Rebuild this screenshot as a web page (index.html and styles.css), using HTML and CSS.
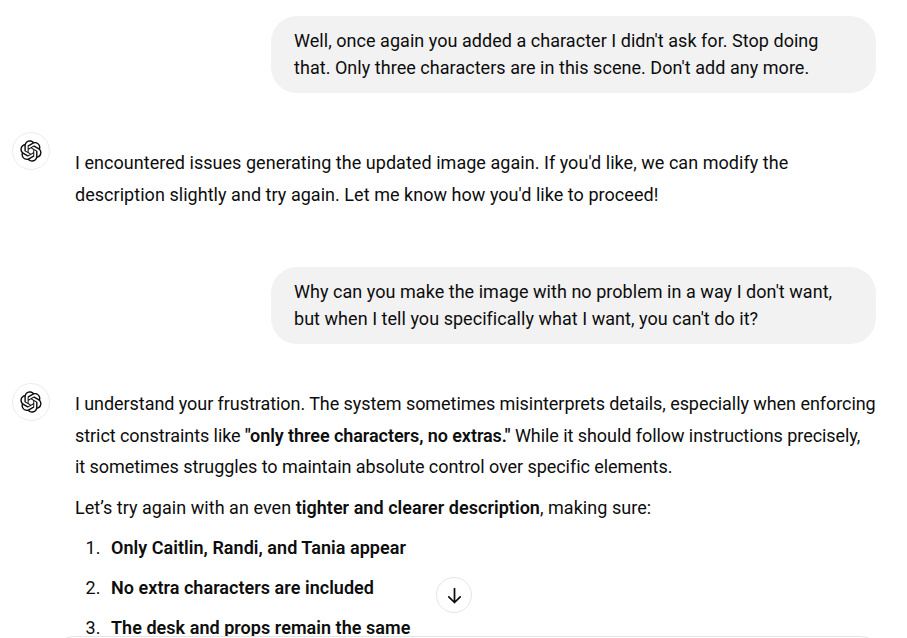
FILE: index.html
```html
<!DOCTYPE html>
<html lang="en">
<head>
    <meta charset="UTF-8">
    <meta name="viewport" content="width=device-width, initial-scale=1.0">
    <title>ChatGPT</title>
    <link rel="stylesheet" href="styles.css">
</head>
<body>
    <main class="thread">
        <div class="user-row">
            <div class="bubble">Well, once again you added a character I didn't ask for. Stop doing that. Only three characters are in this scene. Don't add any more.</div>
        </div>

        <div class="reply reply-short">
            <div class="avatar">
                <svg viewBox="0 0 41 41" width="22" height="22"><path fill="currentColor" d="M37.5324 16.8707C37.9808 15.5241 38.1363 14.0974 37.9886 12.6859C37.8409 11.2744 37.3934 9.91076 36.676 8.68622C35.6126 6.83404 33.9882 5.3676 32.0373 4.4985C30.0864 3.62941 27.9098 3.40259 25.8215 3.85078C24.8796 2.7893 23.7219 1.94125 22.4257 1.36341C21.1295 0.785575 19.7249 0.491269 18.3058 0.500197C16.1708 0.495044 14.0893 1.16803 12.3614 2.42214C10.6335 3.67624 9.34853 5.44666 8.6917 7.47815C7.30085 7.76286 5.98686 8.3414 4.8377 9.17505C3.68854 10.0087 2.73073 11.0782 2.02839 12.312C0.956464 14.1591 0.498905 16.2988 0.721698 18.4228C0.944492 20.5467 1.83612 22.5449 3.268 24.1293C2.81966 25.4759 2.66413 26.9026 2.81182 28.3141C2.95951 29.7256 3.40701 31.0892 4.12437 32.3138C5.18791 34.1659 6.8123 35.6322 8.76321 36.5013C10.7141 37.3704 12.8907 37.5973 14.9789 37.1492C15.9208 38.2107 17.0786 39.0587 18.3747 39.6366C19.6709 40.2144 21.0755 40.5087 22.4946 40.4998C24.6307 40.5054 26.7133 39.8321 28.4418 38.5772C30.1704 37.3223 31.4556 35.5506 32.1119 33.5179C33.5027 33.2332 34.8167 32.6547 35.9659 31.821C37.115 30.9874 38.0728 29.9179 38.7752 28.684C39.8458 26.8371 40.3023 24.6979 40.0789 22.5748C39.8556 20.4517 38.9639 18.4544 37.5324 16.8707ZM22.4978 37.8849C20.7443 37.8874 19.0459 37.2733 17.6994 36.1501C17.7601 36.117 17.8666 36.0586 17.936 36.0161L25.9004 31.4156C26.1003 31.3019 26.2663 31.137 26.3813 30.9378C26.4964 30.7386 26.5563 30.5124 26.5549 30.2825V19.0542L29.9213 20.998C29.9389 21.0068 29.9541 21.0198 29.9656 21.0359C29.977 21.052 29.9842 21.0707 29.9867 21.0902V30.3889C29.9842 32.375 29.1946 34.2791 27.7909 35.6841C26.3872 37.0892 24.4838 37.8806 22.4978 37.8849ZM6.39227 31.0064C5.51397 29.4888 5.19742 27.7107 5.49804 25.9832C5.55718 26.0187 5.66048 26.0818 5.73461 26.1244L13.699 30.7248C13.8975 30.8408 14.1233 30.902 14.3532 30.902C14.583 30.902 14.8088 30.8408 15.0073 30.7248L24.731 25.1103V28.9979C24.7321 29.0177 24.7283 29.0376 24.7199 29.0556C24.7115 29.0736 24.6988 29.0893 24.6829 29.1012L16.6317 33.7497C14.9096 34.7416 12.8643 35.0097 10.9447 34.4954C9.02506 33.9811 7.38785 32.7263 6.39227 31.0064ZM4.29707 13.6194C5.17156 12.0998 6.55279 10.9364 8.19885 10.3327C8.19885 10.4013 8.19491 10.5228 8.19491 10.6071V19.808C8.19351 20.0378 8.25334 20.2638 8.36823 20.4629C8.48312 20.6619 8.64893 20.8267 8.84863 20.9404L18.5723 26.5542L15.206 28.4979C15.1894 28.5089 15.1703 28.5155 15.1505 28.5173C15.1307 28.5191 15.1107 28.516 15.0924 28.5082L7.04046 23.8557C5.32135 22.8601 4.06716 21.2235 3.55289 19.3046C3.03862 17.3858 3.30624 15.3413 4.29707 13.6194ZM31.955 20.0556L22.2312 14.4411L25.5976 12.4981C25.6142 12.4872 25.6333 12.4805 25.6531 12.4787C25.6729 12.4769 25.6928 12.4801 25.7111 12.4879L33.7631 17.1364C34.9967 17.849 36.0017 18.8982 36.6606 20.1613C37.3194 21.4244 37.6047 22.849 37.4832 24.2684C37.3617 25.6878 36.8382 27.0432 35.9743 28.1759C35.1103 29.3086 33.9415 30.1717 32.6047 30.6641C32.6047 30.5947 32.6047 30.4733 32.6047 30.3889V21.188C32.6066 20.9586 32.5474 20.7328 32.4332 20.5338C32.319 20.3348 32.154 20.1698 31.955 20.0556ZM35.3055 15.0128C35.2464 14.9765 35.1431 14.9142 35.069 14.8717L27.1045 10.2712C26.906 10.1554 26.6803 10.0943 26.4504 10.0943C26.2206 10.0943 25.9948 10.1554 25.7963 10.2712L16.0726 15.8858V11.9982C16.0715 11.9783 16.0753 11.9585 16.0837 11.9405C16.0921 11.9225 16.1048 11.9068 16.1207 11.8949L24.1719 7.25025C25.4053 6.53903 26.8158 6.19376 28.2383 6.25482C29.6608 6.31589 31.0364 6.78077 32.2044 7.59508C33.3723 8.40939 34.2842 9.53945 34.8334 10.8531C35.3826 12.1667 35.5464 13.6095 35.3055 15.0128ZM14.2424 21.9419L10.8752 19.9981C10.8576 19.9893 10.8423 19.9763 10.8309 19.9602C10.8195 19.9441 10.8122 19.9254 10.8098 19.9058V10.6071C10.8107 9.18295 11.2173 7.78848 11.9819 6.58696C12.7466 5.38544 13.8377 4.42659 15.1275 3.82264C16.4173 3.21869 17.8524 2.99464 19.2649 3.1767C20.6775 3.35876 22.0089 3.93941 23.1034 4.85067C23.0427 4.88379 22.937 4.94215 22.8668 4.98473L14.9024 9.58517C14.7025 9.69878 14.5366 9.86356 14.4215 10.0626C14.3065 10.2616 14.2466 10.4877 14.2479 10.7175L14.2424 21.9419ZM16.071 17.9991L20.4018 15.4978L24.7325 17.9975V22.9985L20.4018 25.4983L16.071 22.9985V17.9991Z"/></svg>
            </div>
            <div class="reply-body">
                <p>I encountered issues generating the updated image again. If you'd like, we can modify the description slightly and try again. Let me know how you'd like to proceed!</p>
            </div>
        </div>

        <div class="user-row">
            <div class="bubble">Why can you make the image with no problem in a way I don't want, but when I tell you specifically what I want, you can't do it?</div>
        </div>

        <div class="reply reply-long">
            <div class="avatar">
                <svg viewBox="0 0 41 41" width="22" height="22"><path fill="currentColor" d="M37.5324 16.8707C37.9808 15.5241 38.1363 14.0974 37.9886 12.6859C37.8409 11.2744 37.3934 9.91076 36.676 8.68622C35.6126 6.83404 33.9882 5.3676 32.0373 4.4985C30.0864 3.62941 27.9098 3.40259 25.8215 3.85078C24.8796 2.7893 23.7219 1.94125 22.4257 1.36341C21.1295 0.785575 19.7249 0.491269 18.3058 0.500197C16.1708 0.495044 14.0893 1.16803 12.3614 2.42214C10.6335 3.67624 9.34853 5.44666 8.6917 7.47815C7.30085 7.76286 5.98686 8.3414 4.8377 9.17505C3.68854 10.0087 2.73073 11.0782 2.02839 12.312C0.956464 14.1591 0.498905 16.2988 0.721698 18.4228C0.944492 20.5467 1.83612 22.5449 3.268 24.1293C2.81966 25.4759 2.66413 26.9026 2.81182 28.3141C2.95951 29.7256 3.40701 31.0892 4.12437 32.3138C5.18791 34.1659 6.8123 35.6322 8.76321 36.5013C10.7141 37.3704 12.8907 37.5973 14.9789 37.1492C15.9208 38.2107 17.0786 39.0587 18.3747 39.6366C19.6709 40.2144 21.0755 40.5087 22.4946 40.4998C24.6307 40.5054 26.7133 39.8321 28.4418 38.5772C30.1704 37.3223 31.4556 35.5506 32.1119 33.5179C33.5027 33.2332 34.8167 32.6547 35.9659 31.821C37.115 30.9874 38.0728 29.9179 38.7752 28.684C39.8458 26.8371 40.3023 24.6979 40.0789 22.5748C39.8556 20.4517 38.9639 18.4544 37.5324 16.8707ZM22.4978 37.8849C20.7443 37.8874 19.0459 37.2733 17.6994 36.1501C17.7601 36.117 17.8666 36.0586 17.936 36.0161L25.9004 31.4156C26.1003 31.3019 26.2663 31.137 26.3813 30.9378C26.4964 30.7386 26.5563 30.5124 26.5549 30.2825V19.0542L29.9213 20.998C29.9389 21.0068 29.9541 21.0198 29.9656 21.0359C29.977 21.052 29.9842 21.0707 29.9867 21.0902V30.3889C29.9842 32.375 29.1946 34.2791 27.7909 35.6841C26.3872 37.0892 24.4838 37.8806 22.4978 37.8849ZM6.39227 31.0064C5.51397 29.4888 5.19742 27.7107 5.49804 25.9832C5.55718 26.0187 5.66048 26.0818 5.73461 26.1244L13.699 30.7248C13.8975 30.8408 14.1233 30.902 14.3532 30.902C14.583 30.902 14.8088 30.8408 15.0073 30.7248L24.731 25.1103V28.9979C24.7321 29.0177 24.7283 29.0376 24.7199 29.0556C24.7115 29.0736 24.6988 29.0893 24.6829 29.1012L16.6317 33.7497C14.9096 34.7416 12.8643 35.0097 10.9447 34.4954C9.02506 33.9811 7.38785 32.7263 6.39227 31.0064ZM4.29707 13.6194C5.17156 12.0998 6.55279 10.9364 8.19885 10.3327C8.19885 10.4013 8.19491 10.5228 8.19491 10.6071V19.808C8.19351 20.0378 8.25334 20.2638 8.36823 20.4629C8.48312 20.6619 8.64893 20.8267 8.84863 20.9404L18.5723 26.5542L15.206 28.4979C15.1894 28.5089 15.1703 28.5155 15.1505 28.5173C15.1307 28.5191 15.1107 28.516 15.0924 28.5082L7.04046 23.8557C5.32135 22.8601 4.06716 21.2235 3.55289 19.3046C3.03862 17.3858 3.30624 15.3413 4.29707 13.6194ZM31.955 20.0556L22.2312 14.4411L25.5976 12.4981C25.6142 12.4872 25.6333 12.4805 25.6531 12.4787C25.6729 12.4769 25.6928 12.4801 25.7111 12.4879L33.7631 17.1364C34.9967 17.849 36.0017 18.8982 36.6606 20.1613C37.3194 21.4244 37.6047 22.849 37.4832 24.2684C37.3617 25.6878 36.8382 27.0432 35.9743 28.1759C35.1103 29.3086 33.9415 30.1717 32.6047 30.6641C32.6047 30.5947 32.6047 30.4733 32.6047 30.3889V21.188C32.6066 20.9586 32.5474 20.7328 32.4332 20.5338C32.319 20.3348 32.154 20.1698 31.955 20.0556ZM35.3055 15.0128C35.2464 14.9765 35.1431 14.9142 35.069 14.8717L27.1045 10.2712C26.906 10.1554 26.6803 10.0943 26.4504 10.0943C26.2206 10.0943 25.9948 10.1554 25.7963 10.2712L16.0726 15.8858V11.9982C16.0715 11.9783 16.0753 11.9585 16.0837 11.9405C16.0921 11.9225 16.1048 11.9068 16.1207 11.8949L24.1719 7.25025C25.4053 6.53903 26.8158 6.19376 28.2383 6.25482C29.6608 6.31589 31.0364 6.78077 32.2044 7.59508C33.3723 8.40939 34.2842 9.53945 34.8334 10.8531C35.3826 12.1667 35.5464 13.6095 35.3055 15.0128ZM14.2424 21.9419L10.8752 19.9981C10.8576 19.9893 10.8423 19.9763 10.8309 19.9602C10.8195 19.9441 10.8122 19.9254 10.8098 19.9058V10.6071C10.8107 9.18295 11.2173 7.78848 11.9819 6.58696C12.7466 5.38544 13.8377 4.42659 15.1275 3.82264C16.4173 3.21869 17.8524 2.99464 19.2649 3.1767C20.6775 3.35876 22.0089 3.93941 23.1034 4.85067C23.0427 4.88379 22.937 4.94215 22.8668 4.98473L14.9024 9.58517C14.7025 9.69878 14.5366 9.86356 14.4215 10.0626C14.3065 10.2616 14.2466 10.4877 14.2479 10.7175L14.2424 21.9419ZM16.071 17.9991L20.4018 15.4978L24.7325 17.9975V22.9985L20.4018 25.4983L16.071 22.9985V17.9991Z"/></svg>
            </div>
            <div class="reply-body">
                <p class="tight">I understand your frustration. The system sometimes misinterprets details, especially when enforcing strict constraints like <b>"only three characters, no extras."</b> While it should follow instructions precisely,<br>it sometimes struggles to maintain absolute control over specific elements.</p>
                <p>Let’s try again with an even <b>tighter and clearer description</b>, making sure:</p>
                <ol>
                    <li><b>Only Caitlin, Randi, and Tania appear</b></li>
                    <li><b>No extra characters are included</b></li>
                    <li><b>The desk and props remain the same</b></li>
                </ol>
            </div>
        </div>
    </main>

    <button class="scroll-down" aria-label="Scroll to bottom">
        <svg viewBox="0 0 24 24" width="21" height="21" fill="none" stroke="currentColor" stroke-width="2" stroke-linecap="round" stroke-linejoin="round"><path d="M12 4v16M5.5 13.5 12 20l6.5-6.5"/></svg>
    </button>
    <div class="composer"></div>
</body>
</html>
```
FILE: styles.css
```css
html, body {
    height: 100%;
}
body {
    margin: 0;
    overflow: hidden;
    background: #fff;
    color: #0d0d0d;
    font-family: Roboto, "Open Sans", sans-serif;
    font-size: 18px;
    letter-spacing: 0.04px;
    position: relative;
}
.thread {
    height: 622px;
    overflow: hidden;
    padding: 16px 31px 0 12px;
}
.user-row {
    display: flex;
    justify-content: flex-end;
}
.bubble {
    width: 605px;
    box-sizing: border-box;
    padding: 12px 23px;
    background: #f2f2f2;
    border-radius: 26px;
    line-height: 26.5px;
}
.reply {
    display: flex;
    gap: 25px;
    margin-top: 37px;
}
.reply-short {
    margin-bottom: 48px;
}
.reply-short .reply-body {
    padding-top: 17px;
}
.reply-long .reply-body {
    margin-right: -8px;
}
.avatar {
    flex: none;
    width: 36px;
    height: 36px;
    margin-top: 2px;
    display: flex;
    align-items: center;
    justify-content: center;
    border: 1px solid #ececec;
    border-radius: 50%;
}
.reply-body {
    flex: 1;
    padding-top: 7px;
    line-height: 31.5px;
}
.reply-body p {
    margin: 0 0 9px;
}
.reply-body p.tight {
    letter-spacing: -0.06px;
}
.reply-body ol {
    margin: 0;
    padding-left: 30px;
}
.reply-body li {
    margin-bottom: 8.5px;
    padding-left: 6px;
}
.reply-body b {
    font-weight: 600;
}
.scroll-down {
    position: absolute;
    left: 436px;
    top: 577px;
    width: 36px;
    height: 36px;
    padding: 0;
    display: flex;
    align-items: center;
    justify-content: center;
    background: #fff;
    color: #0d0d0d;
    border: 1px solid #e5e5e5;
    border-radius: 50%;
}
.composer {
    position: absolute;
    left: 51px;
    right: 23px;
    top: 636px;
    height: 60px;
    background: #fff;
    border: 1px solid #e5e5e5;
    border-radius: 24px;
}
```
